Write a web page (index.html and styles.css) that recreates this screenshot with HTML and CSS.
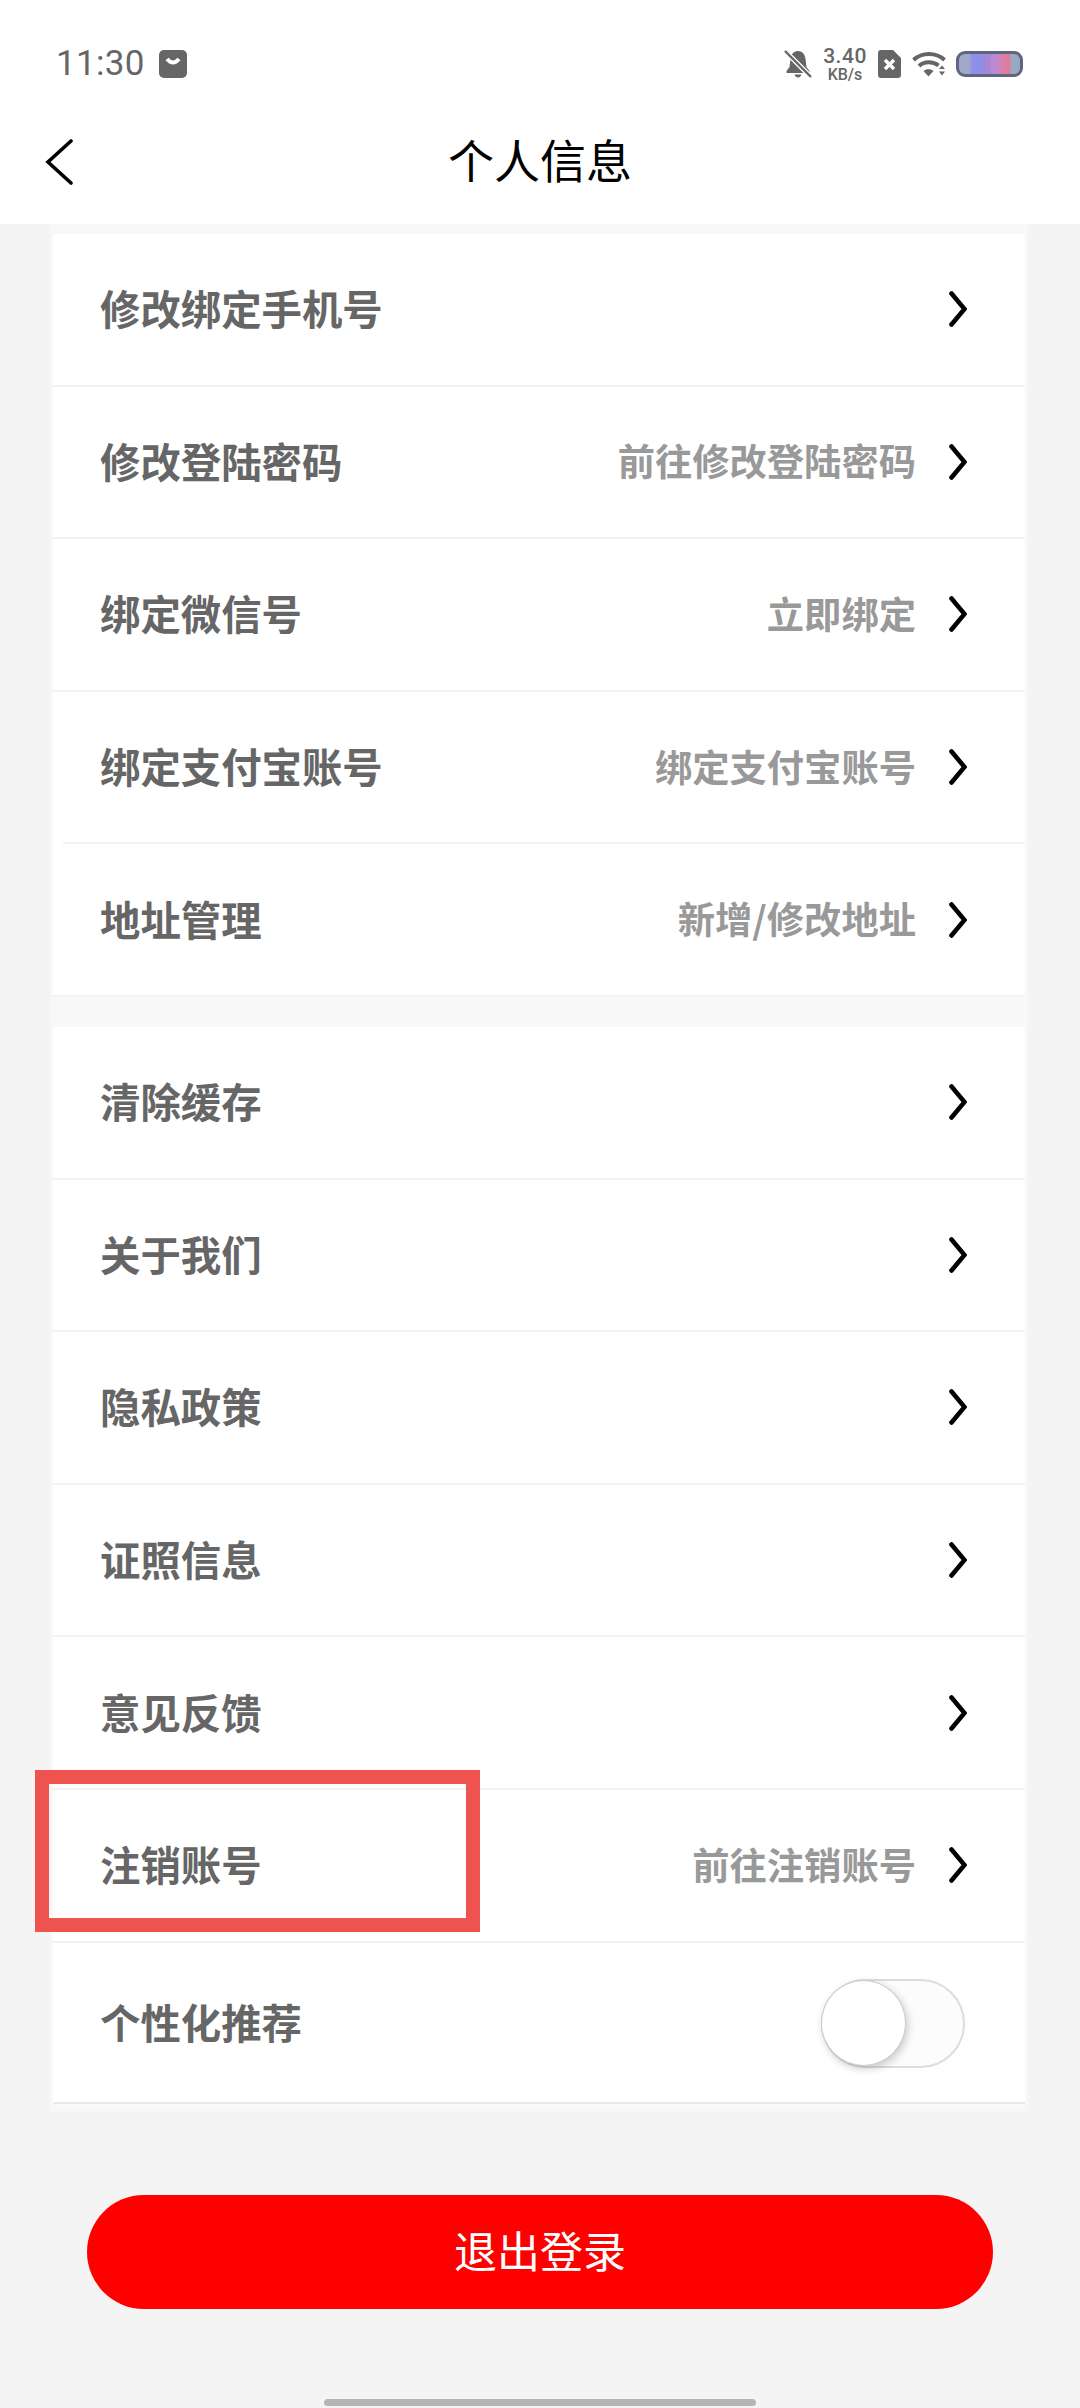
FILE: index.html
```html
<!DOCTYPE html>
<html lang="zh-CN">
<head>
	<meta charset="UTF-8">
	<title>个人信息</title>
	<link rel="stylesheet" href="styles.css">
</head>
<body>
	<svg class="defs" width="0" height="0">
		<symbol id="chevron" viewBox="0 0 18 36">
			<path d="M2.5 2.5 L15.5 18 L2.5 33.5" fill="none" stroke="#000" stroke-width="4.6" stroke-linecap="round" stroke-linejoin="miter"/>
		</symbol>
	</svg>

	<header class="top">
		<div class="status">
			<div class="status-left">
				<span class="time">11:30</span>
				<svg class="bag" viewBox="0 0 28 28">
					<rect width="28" height="28" rx="5" fill="#666"/>
					<path d="M8 9 Q14 16 20 9" fill="none" stroke="#fff" stroke-width="4"/>
				</svg>
			</div>
			<div class="status-right">
				<svg class="bell" viewBox="0 0 28 28">
					<path d="M14 1 C9 1 7 5 6.5 9 L5.5 17 L2.5 21 V23 H25.5 V21 L22.5 17 L21.500 9 C21 5 19 1 14 1 Z" fill="#666"/>
					<path d="M10.500 24.500 H17.500 Q16.500 27.500 14 27.500 Q11.500 27.500 10.500 24.500 Z" fill="#666"/>
					<path d="M1 1 L27 27" stroke="#fff" stroke-width="5"/>
					<path d="M1 1 L27 27" stroke="#666" stroke-width="2.4"/>
				</svg>
				<div class="speed">
					<span class="speed-num">3.40</span>
					<span class="speed-unit">KB/s</span>
				</div>
				<svg class="sim" viewBox="0 0 23 28">
					<path d="M3 0 H15 L23 8 V25 A3 3 0 0 1 20 28 H3 A3 3 0 0 1 0 25 V3 A3 3 0 0 1 3 0 Z" fill="#666"/>
					<path d="M7 10 L16 19 M16 10 L7 19" stroke="#fff" stroke-width="3.4"/>
				</svg>
				<svg class="wifi" viewBox="0 0 34 26">
					<path d="M1.500 9 C10 1 24 1 32.500 9" fill="none" stroke="#666" stroke-width="4"/>
					<path d="M7 15 C12 10 21 10 26.500 14.500" fill="none" stroke="#666" stroke-width="4"/>
					<path d="M11.500 20 C14 17.500 19 17.500 21.500 20 L16.500 25.500 Z" fill="#666"/>
					<path d="M27 18 L30 14.500 L33 18 Z M27 20.500 H33 L30 24.500 Z" fill="#666"/>
				</svg>
				<div class="battery"></div>
			</div>
		</div>
		<nav class="nav">
			<svg class="back" viewBox="0 0 28 46">
				<path d="M26 2 L3 23 L26 44" fill="none" stroke="#000" stroke-width="3.600" stroke-linecap="round"/>
			</svg>
			<h1 class="nav-title">个人信息</h1>
		</nav>
	</header>

	<main class="content">
		<section class="card">
			<div class="row">
				<span class="row-label">修改绑定手机号</span>
				<svg class="row-arrow"><use href="#chevron"/></svg>
			</div>
			<div class="row">
				<span class="row-label">修改登陆密码</span>
				<span class="row-value">前往修改登陆密码</span>
				<svg class="row-arrow"><use href="#chevron"/></svg>
			</div>
			<div class="row">
				<span class="row-label">绑定微信号</span>
				<span class="row-value">立即绑定</span>
				<svg class="row-arrow"><use href="#chevron"/></svg>
			</div>
			<div class="row row-inset">
				<span class="row-label">绑定支付宝账号</span>
				<span class="row-value">绑定支付宝账号</span>
				<svg class="row-arrow"><use href="#chevron"/></svg>
			</div>
			<div class="row">
				<span class="row-label">地址管理</span>
				<span class="row-value">新增/修改地址</span>
				<svg class="row-arrow"><use href="#chevron"/></svg>
			</div>
		</section>

		<section class="card card-second">
			<div class="row">
				<span class="row-label">清除缓存</span>
				<svg class="row-arrow"><use href="#chevron"/></svg>
			</div>
			<div class="row">
				<span class="row-label">关于我们</span>
				<svg class="row-arrow"><use href="#chevron"/></svg>
			</div>
			<div class="row">
				<span class="row-label">隐私政策</span>
				<svg class="row-arrow"><use href="#chevron"/></svg>
			</div>
			<div class="row">
				<span class="row-label">证照信息</span>
				<svg class="row-arrow"><use href="#chevron"/></svg>
			</div>
			<div class="row">
				<span class="row-label">意见反馈</span>
				<svg class="row-arrow"><use href="#chevron"/></svg>
			</div>
			<div class="row row-marked">
				<span class="row-label">注销账号</span>
				<span class="row-value">前往注销账号</span>
				<svg class="row-arrow"><use href="#chevron"/></svg>
				<div class="mark"></div>
			</div>
			<div class="row row-last">
				<span class="row-label">个性化推荐</span>
				<div class="switch"><div class="switch-knob"></div></div>
			</div>
		</section>
	</main>

	<button class="logout">退出登录</button>
	<div class="home-bar"></div>
</body>
</html>
```

FILE: styles.css
```css
* {
	box-sizing: border-box;
}
html, body {
	margin: 0;
	padding: 0;
}
body {
	width: 1080px;
	height: 2408px;
	overflow: hidden;
	background-color: #f4f4f5;
	font-family: "Noto Sans CJK SC", "Noto Sans", sans-serif;
}
.defs {
	position: absolute;
}

/* top */
.top {
	height: 224px;
	background-color: #fff;
}
.status {
	display: flex;
	justify-content: space-between;
	align-items: center;
	height: 126px;
	padding: 2px 57px 0 56px;
}
.status-left {
	display: flex;
	align-items: center;
	gap: 14px;
}
.time {
	font-family: Roboto, sans-serif;
	font-size: 35px;
	letter-spacing: 0.3px;
	color: #666;
	line-height: 40px;
}
.bag {
	width: 28px;
	height: 28px;
}
.status-right {
	display: flex;
	align-items: center;
}
.bell {
	width: 28px;
	height: 28px;
}
.speed {
	display: flex;
	flex-direction: column;
	align-items: center;
	width: 46px;
	margin-left: 10px;
	color: #666;
	font-family: Roboto, sans-serif;
	font-weight: 500;
}
.speed-num {
	font-size: 21px;
	letter-spacing: 0.5px;
	line-height: 21px;
}
.speed-unit {
	font-size: 16px;
	line-height: 16px;
}
.sim {
	width: 23px;
	height: 28px;
	margin-left: 10px;
}
.wifi {
	width: 34px;
	height: 26px;
	margin-left: 11px;
}
.battery {
	width: 67px;
	height: 26px;
	margin-left: 10px;
	border: 3.500px solid #5f6580;
	border-radius: 9px;
	background: linear-gradient(90deg, #a0a8cc 0 16%, #8c90e8 22% 36%, #a088d8 40% 50%, #c088d0 54% 64%, #d880b0 70%, #e07898 82%, #9aa8c4 86% 100%);
}
.nav {
	position: relative;
	display: flex;
	justify-content: center;
	align-items: flex-start;
	height: 98px;
	margin-top: -24px;
}
.back {
	position: absolute;
	left: 45px;
	top: 37px;
	width: 28px;
	height: 46px;
}
.nav-title {
	margin: 26px 0 0;
	font-size: 46px;
	font-weight: 400;
	color: #000;
	line-height: 60px;
}

/* list */
.content {
	margin: 0 52px 0 50px;
	padding: 10px 3px 7px;
	background-color: #f8f8f8;
}
.card {
	background-color: #fff;
}
.card-second {
	margin-top: 30px;
}
.row {
	position: relative;
	display: flex;
	align-items: center;
	height: 152.6px;
	padding: 0 58px 0 47px;
	border-bottom: 2px solid #f2f2f2;
}
.row-inset {
	margin-left: 10px;
	padding-left: 37px;
}
.row-last {
	height: 161px;
	padding-right: 60px;
	padding-top: 2px;
	border-bottom-color: #e8e8e8;
}
.row-label {
	flex: 1;
	margin-bottom: 3px;
	font-size: 40.4px;
	font-weight: 700;
	color: #666;
}
.row-value {
	margin-right: 33px;
	margin-bottom: 3px;
	font-size: 37.3px;
	font-weight: 700;
	color: #999;
}
.row-arrow {
	width: 18px;
	height: 36px;
}

/* highlight box around one row */
.mark {
	position: absolute;
	left: -18px;
	top: -20px;
	width: 445px;
	height: 162px;
	border: 14px solid #ef5350;
}

.switch {
	position: relative;
	width: 144px;
	height: 89px;
	border: 2px solid #ddd;
	border-radius: 45px;
	background-color: #fcfcfc;
}
.switch-knob {
	position: absolute;
	left: -2px;
	top: -1px;
	width: 85px;
	height: 86px;
	border-radius: 50%;
	background-color: #fff;
	border: 1px solid #ccc;
	box-shadow: 2px 3px 8px rgba(0, 0, 0, 0.2);
}

/* bottom */
.logout {
	display: block;
	width: 906px;
	height: 114px;
	margin: 84px 0 0 87px;
	padding: 0 0 5px;
	border: 0;
	border-radius: 57px;
	background-color: #ff0000;
	color: #fff;
	font-family: inherit;
	font-size: 43px;
	font-weight: 400;
}
.home-bar {
	width: 432px;
	height: 7px;
	margin: 90px auto 0;
	border-radius: 4px;
	background-color: #b5b5b5;
}
```
